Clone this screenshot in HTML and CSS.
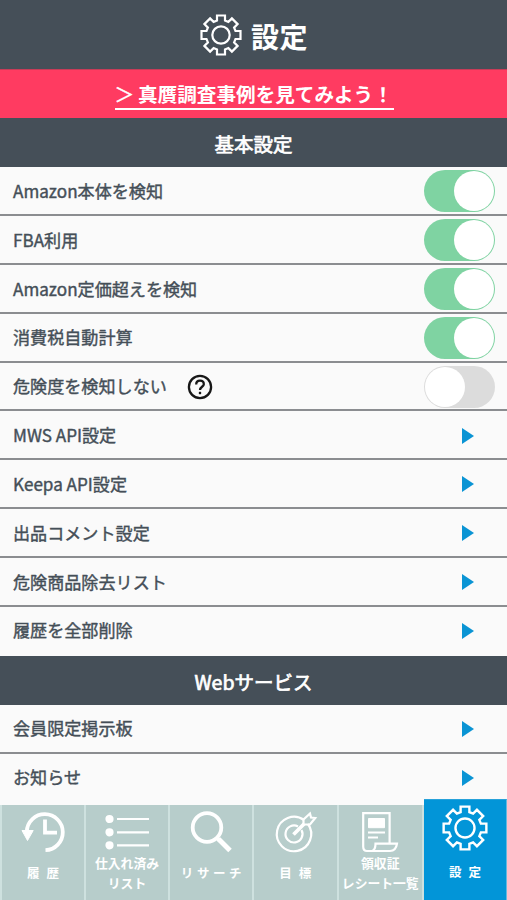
FILE: index.html
```
<!DOCTYPE html>
<html lang="ja">
<head>
<meta charset="utf-8">
<title>設定</title>
<link rel="stylesheet" href="styles.css">
</head>
<body>
<svg width="0" height="0" class="defs">
  <symbol id="gear" viewBox="-21 -21 42 42">
    <path d="M-4-14.5V-19.5H4V-14.5L7.4-13.1L10.9-16.6L16.6-10.9L13.1-7.4L14.5-4H19.5V4H14.5L13.1 7.4L16.6 10.9L10.9 16.6L7.4 13.1L4 14.5V19.5H-4V14.5L-7.4 13.1L-10.9 16.6L-16.6 10.9L-13.1 7.4L-14.5 4H-19.5V-4H-14.5L-13.1-7.4L-16.6-10.9L-10.9-16.6L-7.4-13.1Z"/>
    <circle r="8.7"/>
  </symbol>
</svg>
<div class="app">
  <header class="header"><svg class="header-gear line"><use href="#gear"/></svg><h1>設定</h1></header>
  <div class="banner"><a><span class="chevron">＞</span>真贋調査事例を見てみよう！</a></div>
  <main class="list">
    <h2 class="section">基本設定</h2>
    <div class="row"><span>Amazon本体を検知</span><i class="toggle on"></i></div>
    <div class="row"><span>FBA利用</span><i class="toggle on"></i></div>
    <div class="row"><span>Amazon定価超えを検知</span><i class="toggle on"></i></div>
    <div class="row"><span>消費税自動計算</span><i class="toggle on"></i></div>
    <div class="row"><span>危険度を検知しない</span>
      <svg class="help" viewBox="0 0 26 26"><circle cx="13" cy="13" r="11.1"/><path d="M9.2 10.4C9.2 8.1 10.8 6.7 13 6.7S16.8 8.2 16.8 10.2C16.8 12.6 13 13 13 16"/><path d="M13 17.8V20.2"/></svg>
      <i class="toggle"></i></div>
    <div class="row"><span>MWS API設定</span><i class="arrow"></i></div>
    <div class="row"><span>Keepa API設定</span><i class="arrow"></i></div>
    <div class="row"><span>出品コメント設定</span><i class="arrow"></i></div>
    <div class="row"><span>危険商品除去リスト</span><i class="arrow"></i></div>
    <div class="row last"><span>履歴を全部削除</span><i class="arrow"></i></div>
    <h2 class="section">Webサービス</h2>
    <div class="row"><span>会員限定掲示板</span><i class="arrow"></i></div>
    <div class="row last"><span>お知らせ</span><i class="arrow"></i></div>
  </main>
  <nav class="tabs">
    <div class="tab">
      <svg class="icon line" viewBox="0 0 50 50"><path class="thick" d="M8.800 24.500A18 18 0 1 1 27.500 43.200"/><path class="fill tip" d="M4 23.500H15.200L9.500 33.500Z"/><path class="thick" d="M27 12.500V25.700H39"/></svg>
      <span class="label wide">履歴</span>
    </div>
    <div class="tab">
      <svg class="icon line" viewBox="0 0 50 50"><g class="fill"><circle cx="7.500" cy="12" r="3"/><circle cx="7.500" cy="25.300" r="3"/><circle cx="7.500" cy="38.300" r="3"/></g><path d="M15 12H47M15 25.300H47M15 38.300H47"/></svg>
      <span class="label double">仕入れ済み<br>リスト</span>
    </div>
    <div class="tab">
      <svg class="icon line" viewBox="0 0 50 50"><circle class="thick" cx="21" cy="20.500" r="14.300"/><path class="thick" d="M30.500 30.500L34 34"/><path class="handle" d="M32.500 32L44 43.500"/></svg>
      <span class="label wide search">リサーチ</span>
    </div>
    <div class="tab">
      <svg class="icon line" viewBox="0 0 50 50"><path d="M34 13A17.200 17.200 0 1 0 38 17"/><path d="M28 19.500A8.500 8.500 0 1 0 31.500 23"/><path class="thick" d="M23.500 27.500L34 17"/><path d="M33.500 17.500V12.500L40 6.500L41 10.500L45.200 11L40 17.500Z"/></svg>
      <span class="label wide">目標</span>
    </div>
    <div class="tab">
      <svg class="icon line" viewBox="0 0 50 50"><path d="M20 44H12Q8.200 44 8.200 39.500V6.200H34.600V36"/><path d="M17 44Q20.500 43 20.500 36.700H42Q41 44 35 44H12"/><path class="fill tip" d="M13.500 11.500H29.500V20.700H13.500Z"/><path d="M13 25.500H30M13 30.500H23"/></svg>
      <span class="label double">領収証<br>レシート一覧</span>
    </div>
    <div class="tab active">
      <svg class="tab-gear line"><use href="#gear"/></svg>
      <span class="label wide">設定</span>
    </div>
  </nav>
</div>
</body>
</html>
```

FILE: styles.css
```
* { box-sizing: border-box; }
body { margin: 0; font-family: "Noto Sans CJK JP", sans-serif; background: #fafafa; color: #454f58; }
.defs { display: block; }
.app { width: 507px; height: 900px; display: flex; flex-direction: column; overflow: hidden; }
.header { height: 69px; flex: none; background: #454f58; color: #fff; display: flex; align-items: center; justify-content: center; gap: 9px; padding: 1px 0 0 1px; }
.header h1 { margin: 0; font-size: 28px; line-height: 40px; font-weight: 700; padding-top: 2px; letter-spacing: .5px; }
.line { fill: none; stroke: #fff; stroke-width: 2.2; }
.header-gear { width: 42px; height: 42px; }
.banner { height: 49px; flex: none; background: #ff3b61; border-top: 1px solid #c83c58; color: #fff; display: flex; justify-content: center; padding: 9px 0 0 1px; }
.banner a { height: 31px; line-height: 29px; border-bottom: 2px solid #fff; font-size: 19.6px; font-weight: 700; white-space: nowrap; width: 279px; }
.chevron { margin-right: 4px; font-weight: 400; -webkit-text-stroke: .5px #fff; }
.list { flex: 1; min-height: 0; overflow: hidden; }
.section { margin: 0; height: 49.2px; line-height: 52px; background: #454f58; color: #fff; text-align: center; font-size: 19.5px; font-weight: 400; -webkit-text-stroke: .7px #fff; }
.row { height: 48.85px; border-bottom: 2px solid #8b8d90; display: flex; align-items: center; padding: 1.5px 12px 0 13px; font-size: 17.1px; -webkit-text-stroke: .4px #454f58; }
.row.last { border-bottom-color: transparent; }
.row span { line-height: 24px; margin-top: -1px; }
.toggle { margin-left: auto; width: 71px; height: 42px; border-radius: 21px; background: #dcdcdc; padding: 1px; display: flex; }
.toggle::before { content: ""; width: 40px; height: 40px; border-radius: 50%; background: #fff; }
.toggle.on { background: #7fd3a2; justify-content: flex-end; }
.arrow { margin: 0 21px 0 auto; border-left: 12px solid #0a94d4; border-top: 8.5px solid transparent; border-bottom: 8.5px solid transparent; }
.help { width: 26px; height: 26px; margin-left: 20px; fill: none; stroke: #171717; stroke-width: 2.3; }
.tabs { height: 101px; flex: none; display: grid; grid-template-columns: 86px 84px 84px 84.500px 85.500px 83px; align-items: end; }
.tab { height: 95px; background: #b7cdcb; border-right: 2px solid #cee1df; display: flex; flex-direction: column; align-items: center; color: #fff; text-align: center; }
.tab:first-child { border-left: 2px solid #cee1df; }
.icon { width: 50px; height: 50px; margin-top: 2px; }
.thick { stroke-width: 3.8; }
.handle { stroke-width: 5; }
.fill { fill: #fff; }
.tip { stroke-width: 1; }
.label { display: block; font-size: 12.500px; line-height: 20px; font-weight: 700; white-space: nowrap; }
.wide { letter-spacing: 7px; margin-top: 6px; padding-left: 7px; }
.search { letter-spacing: 3.600px; padding-left: 4px; }
.double { font-size: 12.800px; margin-top: -4px; }
.active { height: 101px; background: #0295d8; border-top: 1px solid #27a2da; border-right: 1px solid #65b9df; }
.tab-gear { width: 46px; height: 46px; margin-top: 5px; }
.active .label { margin-top: 11px; }
```
